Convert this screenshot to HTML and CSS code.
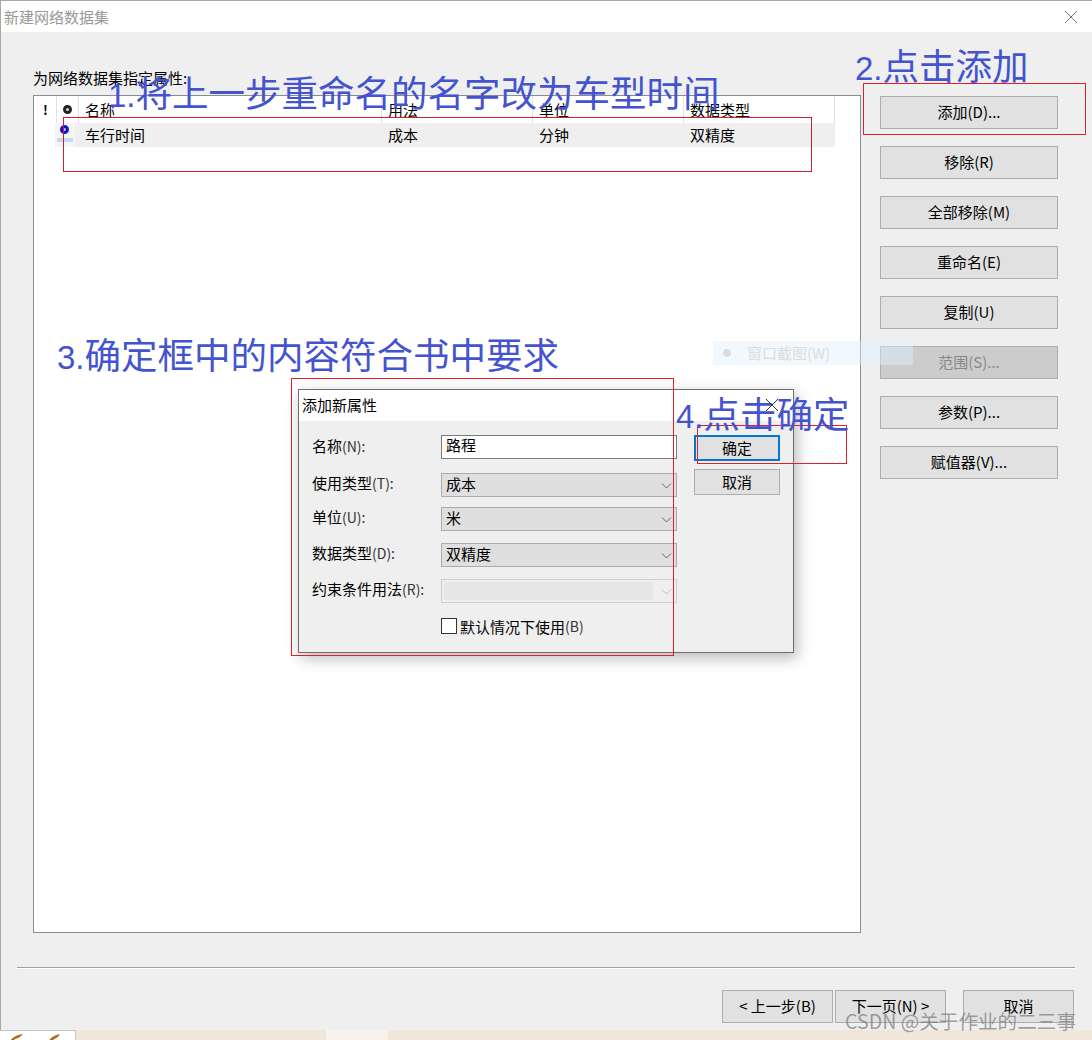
FILE: index.html
```html
<!DOCTYPE html>
<html lang="zh-CN">
<head>
  <meta charset="UTF-8">
  <meta name="viewport" content="width=device-width, initial-scale=1.0">
  <title>新建网络数据集</title>
  <link rel="stylesheet" href="styles.css">
</head>
<body>
  <div class="window">
    <header class="titlebar">
      <span class="title">新建网络数据集</span>
      <svg class="close" width="14" height="14" viewBox="0 0 14 14"><path d="M1 1l12 12M13 1L1 13" stroke="#777" fill="none"/></svg>
    </header>

    <div class="content">
      <div class="main">
        <div class="left">
          <p class="prompt">为网络数据集指定属性:</p>
          <div class="listbox">
            <div class="list-head">
              <div class="col-flag">!</div>
              <div class="col-icon"><span class="dot dot-dark"></span></div>
              <div class="col-name">名称</div>
              <div class="col-usage">用法</div>
              <div class="col-unit">单位</div>
              <div class="col-type">数据类型</div>
            </div>
            <div class="list-row">
              <div class="row-flag"></div>
              <div class="row-icon"><span class="dot dot-blue"></span><span class="row-mark"></span></div>
              <div class="row-name">车行时间</div>
              <div class="col-usage cell">成本</div>
              <div class="col-unit cell">分钟</div>
              <div class="col-type cell">双精度</div>
            </div>
          </div>
        </div>
        <div class="side">
          <button class="btn">添加(D)...</button>
          <button class="btn">移除(R)</button>
          <button class="btn">全部移除(M)</button>
          <button class="btn">重命名(E)</button>
          <button class="btn">复制(U)</button>
          <button class="btn btn-off">范围(S)...</button>
          <button class="btn">参数(P)...</button>
          <button class="btn">赋值器(V)...</button>
        </div>
      </div>
      <div class="separator"></div>
      <div class="footer">
        <button class="btn btn-foot">&lt; 上一步(B)</button>
        <button class="btn btn-foot">下一页(N) &gt;</button>
        <button class="btn btn-foot btn-cancel">取消</button>
      </div>
    </div>
  </div>

  <div class="strip">
    <div class="strip-tab">
      <svg width="76" height="10" viewBox="0 0 76 10"><path d="M10 10q4-6 13-7-3 4-8 5l-2 2zM49 10q2-5 11-7-2 4-6 5l-1 2z" fill="#b5651d"/></svg>
    </div>
    <div class="strip-gap"></div>
    <div class="strip-light"></div>
    <div class="strip-rest"></div>
  </div>

  <!-- floating dialog -->
  <div class="dialog">
    <div class="dialog-title">添加新属性</div>
    <div class="dialog-body">
      <div class="form">
        <div class="field">
          <label class="label-first">名称<span class="key">(N):</span></label>
          <div class="input">路程</div>
        </div>
        <div class="field field-t1">
          <label>使用类型<span class="key">(T):</span></label>
          <div class="select">成本<svg class="chev" width="11" height="6" viewBox="0 0 11 6"><path d="M1 .5l4.5 4.5L10 .5" stroke="#666" fill="none"/></svg></div>
        </div>
        <div class="field field-t2">
          <label>单位<span class="key">(U):</span></label>
          <div class="select">米<svg class="chev" width="11" height="6" viewBox="0 0 11 6"><path d="M1 .5l4.5 4.5L10 .5" stroke="#666" fill="none"/></svg></div>
        </div>
        <div class="field field-t3">
          <label>数据类型<span class="key">(D):</span></label>
          <div class="select">双精度<svg class="chev" width="11" height="6" viewBox="0 0 11 6"><path d="M1 .5l4.5 4.5L10 .5" stroke="#666" fill="none"/></svg></div>
        </div>
        <div class="field field-t3">
          <label>约束条件用法<span class="key">(R):</span></label>
          <div class="select select-off"><span class="select-fill"></span><svg class="chev" width="11" height="6" viewBox="0 0 11 6"><path d="M1 .5l4.5 4.5L10 .5" stroke="#bbb" fill="none"/></svg></div>
        </div>
        <div class="check-row">
          <span class="checkbox"></span>默认情况下使用<span class="key">(B)</span>
        </div>
      </div>
      <div class="dialog-actions">
        <button class="dlg-btn dlg-default">确定</button>
        <button class="dlg-btn">取消</button>
      </div>
    </div>
  </div>

  <!-- screenshot tooltip left behind in the capture -->
  <div class="ghost"><span class="ghost-dot"></span>窗口截图(W)</div>

  <!-- annotations on top of the screenshot -->
  <div class="box box-1"></div>
  <div class="box box-2"></div>
  <div class="box box-3"></div>
  <div class="box box-4"></div>
  <div class="note note-1"><span class="num">1.</span>将上一步重命名的名字改为车型时间</div>
  <div class="note note-2"><span class="num">2.</span>点击添加</div>
  <div class="note note-3"><span class="num">3.</span>确定框中的内容符合书中要求</div>
  <div class="note note-4"><span class="num">4.</span>点击确定</div>
  <svg class="dialog-close" width="14" height="14" viewBox="0 0 14 14"><path d="M1 1l12 12M13 1L1 13" stroke="#333" fill="none"/></svg>
  <div class="watermark">CSDN @关于作业的二三事</div>
</body>
</html>
```

FILE: styles.css
```css
* {
  margin: 0;
  padding: 0;
  box-sizing: border-box;
}

body {
  width: 1092px;
  height: 1040px;
  position: relative;
  overflow: hidden;
  font-family: "Noto Sans CJK SC", "Liberation Sans", sans-serif;
  font-size: 15px;
  color: #000;
  background: #efefef;
}

button {
  font: inherit;
  color: inherit;
  padding-bottom: 2px;
}

.window {
  height: 1030px;
  border-top: 1px solid #a8a8a8;
  border-left: 1px solid #a8a8a8;
  display: flex;
  flex-direction: column;
}

.titlebar {
  height: 31px;
  flex: none;
  background: #fff;
  display: flex;
  align-items: center;
  justify-content: space-between;
  padding: 0 14px 0 3px;
}

.title {
  color: #999;
}

.content {
  flex: 1;
  display: flex;
  flex-direction: column;
  background: #efefef;
  padding: 0 17px 7px 16px;
}

.main {
  display: flex;
  padding-top: 36px;
  height: 902px;
}

.left {
  width: 828px;
  margin-left: 16px;
  display: flex;
  flex-direction: column;
}

.prompt {
  height: 27px;
  line-height: 20px;
}

.listbox {
  height: 838px;
  background: #fff;
  border: 1px solid #888c94;
}

.list-head {
  height: 27px;
  display: flex;
  line-height: 27px;
}

.list-head > div {
  border-right: 1px solid #e2e2e2;
}

.list-row {
  height: 24px;
  display: flex;
  line-height: 24px;
}

.col-flag {
  width: 23px;
  text-align: center;
  font-weight: 700;
  font-size: 13px;
  padding-left: 1px;
}

.col-icon {
  width: 22px;
  display: flex;
  align-items: center;
  justify-content: center;
}

.col-name {
  width: 303px;
  padding-left: 6px;
}

.col-usage,
.col-unit,
.col-type {
  width: 151px;
  padding-left: 6px;
}

.cell {
  background: #efefef;
}

.row-flag {
  width: 21px;
}

.row-icon {
  width: 20px;
  background: #f5f5f5;
  position: relative;
  padding: 2px 0 0 5px;
}

.row-name {
  width: 307px;
  padding-left: 10px;
  background: #efefef;
}

.row-mark {
  position: absolute;
  left: 2px;
  top: 15px;
  width: 16px;
  height: 4px;
  background: #bfdcf3;
}

.dot {
  display: block;
  width: 9px;
  height: 9px;
  border-radius: 50%;
  border: 3px solid;
}

.dot-dark {
  border-color: #222;
  background: #ddd;
}

.dot-blue {
  border-color: #1010e0;
  background: #bcd;
}

.side {
  margin-left: 19px;
  margin-top: 28px;
  width: 178px;
  display: flex;
  flex-direction: column;
  gap: 17px;
}

.btn {
  height: 33px;
  background: #e1e1e1;
  border: 1px solid #adadad;
  flex: none;
}

.btn-off {
  background: #cccccc;
  color: #888;
}

.separator {
  margin-top: 33px;
  border-top: 1px solid #a0a0a0;
  border-bottom: 1px solid #fff;
}

.footer {
  display: flex;
  margin-top: 21px;
  padding-left: 705px;
}

.btn-foot {
  width: 111px;
  margin-right: 2px;
}

.btn-cancel {
  margin: 0 0 0 15px;
}

.strip {
  height: 10px;
  display: flex;
}

.strip-tab {
  width: 76px;
  background: #fff;
  border-top: 1px solid #c8c8c8;
  border-right: 1px solid #c8c8c8;
  overflow: hidden;
}

.strip-tab svg {
  display: block;
}

.strip-gap {
  width: 250px;
  background: #f0e6da;
}

.strip-light {
  width: 62px;
  background: #f7f2ec;
}

.strip-rest {
  flex: 1;
  background: #f0e6da;
}

/* dialog */
.dialog {
  position: absolute;
  left: 298px;
  top: 389px;
  width: 496px;
  height: 264px;
  border: 1px solid #6e6e6e;
  background: #efefef;
  box-shadow: 3px 5px 14px rgba(0, 0, 0, 0.28);
  display: flex;
  flex-direction: column;
}

.dialog-title {
  height: 31px;
  background: #fff;
  line-height: 30px;
  padding-left: 3px;
}

.dialog-body {
  flex: 1;
  display: flex;
  padding: 14px 13px 0 13px;
}

.form {
  width: 365px;
}

.field {
  display: flex;
  align-items: center;
  height: 24px;
}

.field-t1 {
  margin-top: 14px;
}

.field-t2 {
  margin-top: 10px;
}

.field-t3 {
  margin-top: 12px;
}

.field label {
  width: 129px;
  flex: none;
  position: relative;
  top: -3px;
  white-space: nowrap;
}

.field .label-first {
  top: -2px;
}

.key {
  color: #333;
  font-size: 14px;
}

.input,
.select {
  width: 236px;
  height: 24px;
  line-height: 19px;
  padding-left: 4px;
  border: 1px solid #7a7a7a;
  background: #fff;
  position: relative;
}

.input {
  line-height: 18px;
}

.select {
  background: #dfdfdf;
  border-color: #ababab;
}

.select-off {
  background: #efefef;
  border: 1px solid #cfcfcf;
  padding: 2px;
}

.select-fill {
  display: block;
  width: 209px;
  height: 18px;
  background: #e6e6e6;
}

.chev {
  position: absolute;
  right: 4px;
  top: 9px;
}

.check-row {
  display: flex;
  align-items: center;
  margin: 13px 0 0 129px;
  height: 20px;
  white-space: nowrap;
}

.checkbox {
  width: 16px;
  height: 16px;
  border: 1px solid #333;
  background: #fff;
  margin-right: 3px;
  flex: none;
}

.dialog-actions {
  display: flex;
  flex-direction: column;
  gap: 8px;
  margin-left: 17px;
  width: 86px;
}

.dlg-btn {
  height: 26px;
  background: #e1e1e1;
  border: 1px solid #adadad;
}

.dlg-default {
  border: 2px solid #0078d7;
}

/* faint tooltip */
.ghost {
  position: absolute;
  left: 713px;
  top: 341px;
  width: 200px;
  height: 24px;
  background: rgba(225, 242, 252, 0.45);
  color: #dcdcdc;
  line-height: 24px;
  padding-left: 10px;
  display: flex;
  align-items: center;
}

.ghost-dot {
  width: 8px;
  height: 8px;
  border-radius: 50%;
  background: #dcdcdc;
  margin-right: 16px;
}

/* red boxes and blue notes */
.box {
  position: absolute;
  border: 1px solid #e01f26;
}

.box-1 {
  left: 63px;
  top: 117px;
  width: 749px;
  height: 55px;
  border-color: #cc2027;
}

.box-2 {
  left: 863px;
  top: 83px;
  width: 223px;
  height: 52px;
}

.box-3 {
  left: 291px;
  top: 378px;
  width: 383px;
  height: 278px;
}

.box-4 {
  left: 697px;
  top: 425px;
  width: 150px;
  height: 39px;
}

.note {
  position: absolute;
  font-size: 36.5px;
  line-height: 44px;
  color: #4453cf;
  white-space: nowrap;
  font-family: "Liberation Sans", "Noto Sans CJK SC", sans-serif;
}

.num {
  font-size: 33px;
}

.note-1 {
  left: 108px;
  top: 73px;
}

.note-2 {
  left: 855px;
  top: 46px;
}

.note-3 {
  left: 57px;
  top: 335px;
}

.note-4 {
  left: 676px;
  top: 394px;
}

.dialog-close {
  position: absolute;
  left: 765px;
  top: 398px;
}

.watermark {
  position: absolute;
  left: 845px;
  top: 1009px;
  font-size: 19.6px;
  line-height: 24px;
  color: rgba(120, 120, 120, 0.7);
  white-space: nowrap;
}
```
